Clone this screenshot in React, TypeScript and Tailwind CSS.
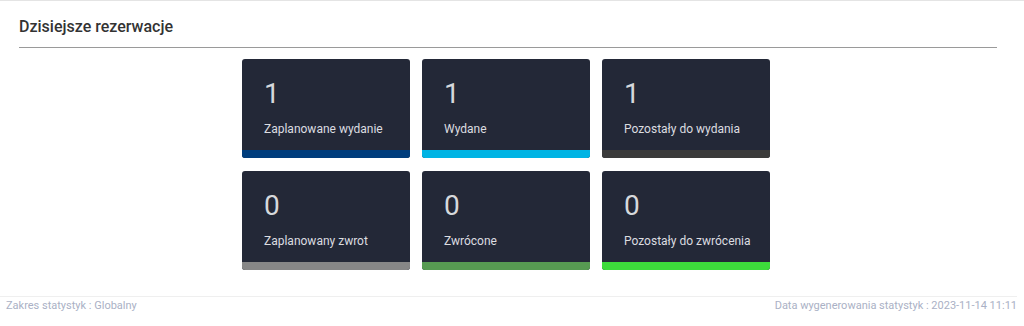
const stats = [
  { value: "1", label: "Zaplanowane wydanie", bar: "bg-[#003d7c]" },
  { value: "1", label: "Wydane", bar: "bg-[#00b4e4]" },
  { value: "1", label: "Pozostały do wydania", bar: "bg-[#3b3b3b]" },
  { value: "0", label: "Zaplanowany zwrot", bar: "bg-[#878787]" },
  { value: "0", label: "Zwrócone", bar: "bg-[#579b52]" },
  { value: "0", label: "Pozostały do zwrócenia", bar: "bg-[#3ddb3b]" },
];

export default function App() {
  return (
    <div className="w-[1024px] h-[326px] bg-white border-t border-[#e4e4e4] font-['Roboto',sans-serif] flex flex-col">
      {/* Header */}
      <div className="pl-[19px] pr-[27px]">
        <h2 className="text-[16px] leading-[20px] font-medium text-[#333] pt-[16px] pb-[10px]">
          Dzisiejsze rezerwacje
        </h2>
        <div className="h-px bg-[#9a9a9a]" />
      </div>

      {/* Cards */}
      <div className="pl-[242px] pt-[11px]">
        <div className="grid grid-cols-[repeat(3,168px)] gap-x-[12px] gap-y-[13px]">
          {stats.map((s, i) => (
            <div key={i} className="h-[99px] bg-[#232837] rounded-[3px] overflow-hidden flex flex-col">
              <div className="flex-1 pl-[22px] pt-[20px]">
                <div className="text-[28px] leading-[30px] font-normal text-[#d6d8dc]">{s.value}</div>
                <div className="mt-[12px] text-[12px] leading-[16px] text-[#dcdde0]">{s.label}</div>
              </div>
              <div className={`h-[8px] ${s.bar}`} />
            </div>
          ))}
        </div>
      </div>

      {/* Footer */}
      <div className="mt-auto pr-[7px] pb-[13px]">
        <div className="h-px bg-[#efefef]" />
        <div className="flex justify-between pl-[6px] pt-[1px] text-[11px] leading-[15px] text-[#aab1c5]">
          <span>Zakres statystyk : Globalny</span>
          <span>Data wygenerowania statystyk : 2023-11-14 11:11</span>
        </div>
      </div>
    </div>
  );
}
